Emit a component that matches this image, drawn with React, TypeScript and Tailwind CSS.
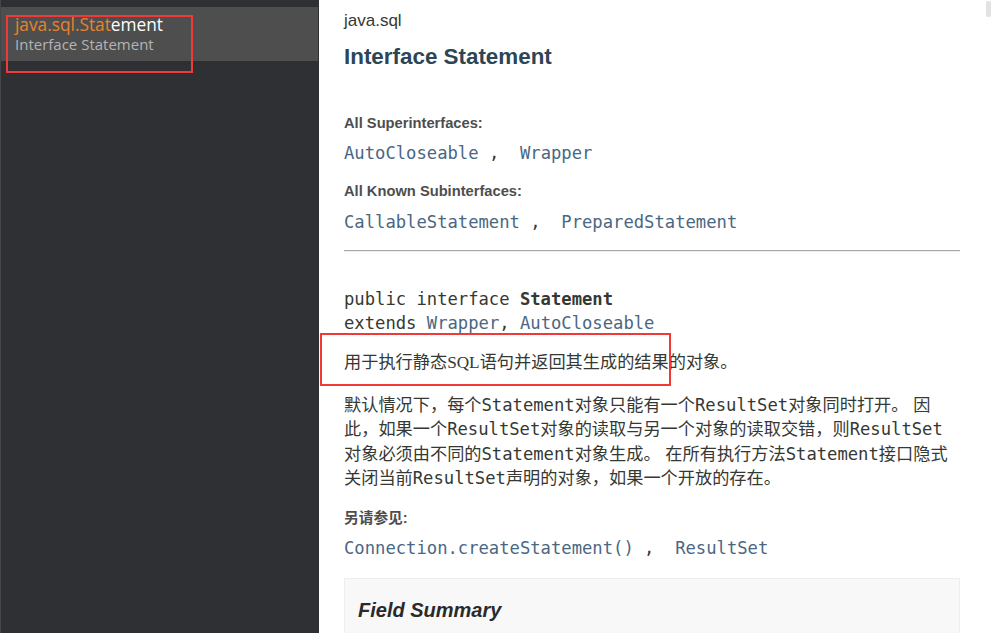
import React from 'react';

const mono = "font-['DejaVu_Sans_Mono',monospace]";
const sans = "font-['Liberation_Sans','Noto_Sans_CJK_SC',sans-serif]";

const Code = ({ children, link }: { children: React.ReactNode; link?: boolean }) => (
  <span className={`${mono} whitespace-pre text-[17.2px] leading-none ${link ? 'text-[#4a6782]' : 'text-[#353833]'}`}>
    {children}
  </span>
);

const Line = ({ children, className = '' }: { children: React.ReactNode; className?: string }) => (
  <div className={`h-[24px] whitespace-nowrap leading-[24px] ${className}`}>{children}</div>
);

const paragraph: React.ReactNode[][] = [
  ['默认情况下，每个', <Code key="a">Statement</Code>, '对象只能有一个', <Code key="b">ResultSet</Code>, '对象同时打开。 因'],
  ['此，如果一个', <Code key="a">ResultSet</Code>, '对象的读取与另一个对象的读取交错，则', <Code key="b">ResultSet</Code>],
  ['对象必须由不同的', <Code key="a">Statement</Code>, '对象生成。 在所有执行方法', <Code key="b">Statement</Code>, '接口隐式'],
  ['关闭当前', <Code key="a">ResultSet</Code>, '声明的对象，如果一个开放的存在。'],
];

export default function App() {
  return (
    <main className="relative flex h-[633px] w-[992px] overflow-hidden bg-white">
      {/* Sidebar */}
      <aside className="h-full w-[319px] shrink-0 border-l border-[#45464a] bg-[#2f3033] pt-[7px]">
        <div className="h-[54px] w-[317px] bg-[#4e4e4e] pl-[14px] pt-[8px] font-['Open_Sans',sans-serif]">
          <div className="text-[17.3px] leading-[20px]">
            <span className="text-[#e8832d]">java.sql.Stat</span>
            <span className="text-white">ement</span>
          </div>
          <div className="text-[15px] leading-[18px] text-[#b4b4b4]">Interface Statement</div>
        </div>
      </aside>

      {/* Content */}
      <section className={`w-[641px] pl-[25px] pt-[11px] text-[#353833] ${sans}`}>
        <div className="h-[20px] text-[17px] leading-[20px]">java.sql</div>
        <h2 className="mt-[12px] h-[28px] text-[22.4px] font-bold leading-[28px] text-[#2c4557]">Interface Statement</h2>

        <div className="mt-[43px] h-[18px] text-[14.7px] font-bold leading-[18px] text-[#4e4e4e]">All Superinterfaces:</div>
        <Line className="mt-[10px]">
          <Code link>AutoCloseable</Code>
          <Code>{' ,  '}</Code>
          <Code link>Wrapper</Code>
        </Line>

        <div className="mt-[16px] h-[18px] text-[14.7px] font-bold leading-[18px] text-[#4e4e4e]">All Known Subinterfaces:</div>
        <Line className="mt-[11px]">
          <Code link>CallableStatement</Code>
          <Code>{' ,  '}</Code>
          <Code link>PreparedStatement</Code>
        </Line>

        <div className="mt-[15px] h-[2px] border-t border-[#a8a8a8] bg-[#eeeeee]" />

        <Line className="mt-[36px]">
          <Code>public interface </Code>
          <span className={`${mono} text-[17.2px] font-bold leading-none text-[#353833]`}>Statement</span>
        </Line>
        <Line>
          <Code>extends </Code>
          <Code link>Wrapper</Code>
          <Code>, </Code>
          <Code link>AutoCloseable</Code>
        </Line>

        <Line className="mt-[14px] text-[17.2px]">
          用于执行静态<span className="font-['Liberation_Serif',serif] leading-none">SQL</span>语句并返回其生成的结果的对象。
        </Line>

        <div className="mt-[19px] text-[17.2px]">
          {paragraph.map((line, i) => (
            <div key={i} className="h-[24.4px] whitespace-nowrap leading-[24.4px]">{line}</div>
          ))}
        </div>

        <div className="mt-[18px] h-[18px] text-[14.7px] font-bold leading-[18px] text-[#4e4e4e]">另请参见:</div>
        <Line className="mt-[10px]">
          <Code link>Connection.createStatement()</Code>
          <Code>{' ,  '}</Code>
          <Code link>ResultSet</Code>
        </Line>

        <div className="mt-[17px] h-[80px] border border-[#ededed] bg-[#f8f8f8] pl-[13px] pt-[19px]">
          <h3 className="text-[20px] font-bold italic leading-[24px] text-[#2a2a2a]">Field Summary</h3>
        </div>
      </section>

      {/* Scrollbar thumb */}
      <div className="absolute right-[1px] top-[1px] h-[16px] w-[5px] rounded-[2px] bg-[#e2e2e2]" />

      {/* Highlight boxes */}
      <div className="absolute left-[6px] top-[15px] h-[58px] w-[187px] border-2 border-[#f03a3a]" />
      <div className="absolute left-[320px] top-[333px] h-[53px] w-[351px] border-2 border-[#f03a3a]" />
    </main>
  );
}
